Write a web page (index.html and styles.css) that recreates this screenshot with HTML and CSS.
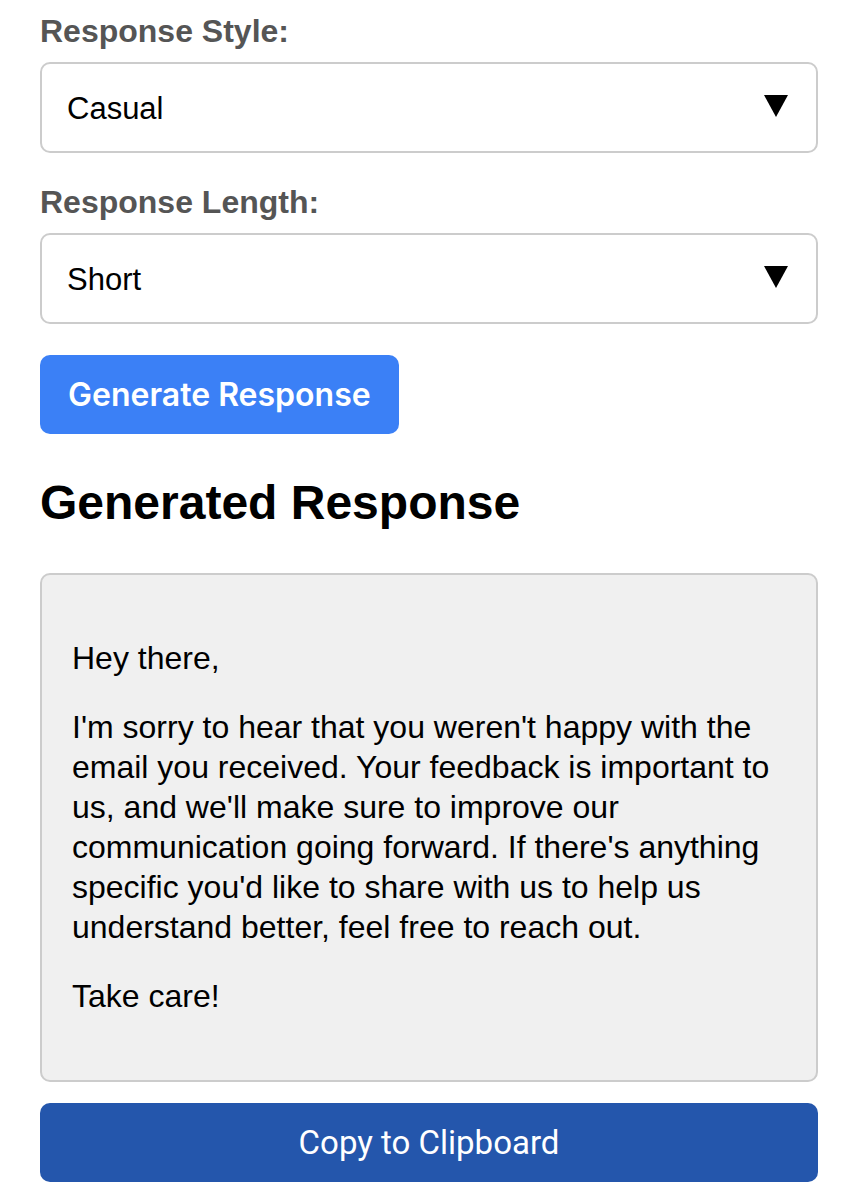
FILE: index.html
```html
<!DOCTYPE html>
<html lang="en">
<head>
    <meta charset="UTF-8">
    <meta name="viewport" content="width=device-width, initial-scale=1.0">
    <title>Email Response Generator</title>
    <link rel="stylesheet" href="styles.css">
</head>
<body>
    <div class="container">
        <label class="field-label">Response Style:</label>
        <div class="select-box">
            <span>Casual</span>
            <svg class="select-arrow" width="24" height="22" viewBox="0 0 24 22"><polygon points="0,0 24,0 12,22" fill="#000"/></svg>
        </div>

        <label class="field-label second">Response Length:</label>
        <div class="select-box">
            <span>Short</span>
            <svg class="select-arrow" width="24" height="22" viewBox="0 0 24 22"><polygon points="0,0 24,0 12,22" fill="#000"/></svg>
        </div>

        <button class="generate-button">Generate Response</button>

        <h2 class="result-title">Generated Response</h2>

        <div class="response-box">
            <p>Hey there,</p>
            <p>I'm sorry to hear that you weren't happy with the email you received. Your feedback is important to us, and we'll make sure to improve our communication going forward. If there's anything specific you'd like to share with us to help us understand better, feel free to reach out.</p>
            <p>Take care!</p>
        </div>

        <button class="copy-button">Copy to Clipboard</button>
    </div>
</body>
</html>
```

FILE: styles.css
```css
:root {
    --blue: #3b80f6;
    --dark-blue: #2456ac;
    --border: #cccccc;
    --label: #555555;
    --box-bg: #f0f0f0;
}

* {
    margin: 0;
    padding: 0;
    box-sizing: border-box;
}

body {
    background-color: #ffffff;
    font-family: 'Liberation Sans', Arial, sans-serif;
    color: #000000;
}

.container {
    padding: 11px 40px 0;
}

.field-label {
    display: block;
    font-size: 32px;
    font-weight: bold;
    line-height: 40px;
    color: var(--label);
    margin-bottom: 11px;
}

.field-label.second {
    margin-top: 29px;
}

.select-box {
    display: flex;
    align-items: center;
    justify-content: space-between;
    height: 91px;
    padding: 0 28px 0 25px;
    border: 2px solid var(--border);
    border-radius: 10px;
    font-size: 31px;
    background-color: #ffffff;
}

.select-box span {
    padding-top: 2px;
}

.select-arrow {
    display: block;
    margin-top: -4px;
}

.generate-button {
    display: block;
    margin-top: 31px;
    height: 79px;
    padding: 0 28px;
    background-color: var(--blue);
    color: #ffffff;
    border: none;
    border-radius: 10px;
    font-family: 'Inter', sans-serif;
    font-size: 32px;
    font-weight: 600;
}

.result-title {
    font-size: 48px;
    font-weight: bold;
    line-height: 56px;
    margin: 41px 0 42px;
}

.response-box {
    background-color: var(--box-bg);
    border: 2px solid var(--border);
    border-radius: 10px;
    padding: 34px 30px 30px;
    font-size: 32px;
    line-height: 40px;
    height: 509px;
}

.response-box p {
    margin: 29px 0;
}

.copy-button {
    display: block;
    width: 100%;
    height: 79px;
    margin-top: 21px;
    background-color: var(--dark-blue);
    color: #ffffff;
    border: none;
    border-radius: 10px;
    font-family: 'Roboto', sans-serif;
    font-size: 33px;
    font-weight: 400;
}
```
